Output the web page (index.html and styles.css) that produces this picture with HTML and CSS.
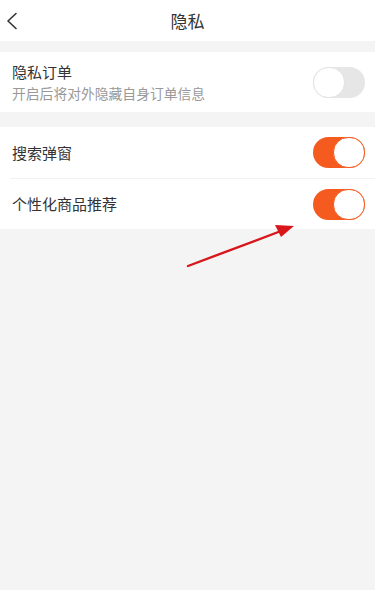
FILE: index.html
```html
<!DOCTYPE html>
<html lang="zh">
<head>
<meta charset="utf-8">
<link rel="stylesheet" href="styles.css">
</head>
<body>
<header class="nav">
  <svg class="back" width="12" height="18" viewBox="0 0 12 18"><path d="M10 1.5 L2 9 L10 16.5" fill="none" stroke="#333" stroke-width="1.6" stroke-linecap="round" stroke-linejoin="round"/></svg>
  <h1 class="title">隐私</h1>
</header>
<section class="card">
  <div class="row row-tall">
    <div class="texts">
      <div class="label">隐私订单</div>
      <div class="sub">开启后将对外隐藏自身订单信息</div>
    </div>
    <span class="switch"><span class="knob"></span></span>
  </div>
</section>
<section class="card card-2">
  <div class="row">
    <div class="label">搜索弹窗</div>
    <span class="switch on"><span class="knob"></span></span>
  </div>
  <div class="row">
    <div class="label">个性化商品推荐</div>
    <span class="switch on"><span class="knob"></span></span>
  </div>
</section>
<svg class="arrow" width="120" height="50" viewBox="0 0 120 50">
  <line x1="7" y1="45" x2="100" y2="10" stroke="#d8151a" stroke-width="2.4" stroke-linecap="round"/>
  <polygon points="113,5 94,4 100,16" fill="#d8151a"/>
</svg>
</body>
</html>
```
FILE: styles.css
```css
* { box-sizing: border-box; }
html, body { margin: 0; padding: 0; }
body {
  background: #f4f4f4;
  font-family: "Noto Sans CJK SC", "Noto Sans", sans-serif;
  color: #333;
  width: 375px;
  height: 590px;
  position: relative;
  overflow: hidden;
}
.nav {
  height: 41px;
  background: #fff;
  display: flex;
  align-items: center;
  justify-content: center;
  position: relative;
}
.back {
  position: absolute;
  left: 6px;
  top: 12px;
}
.title {
  margin: 0;
  font-size: 17px;
  font-weight: normal;
  color: #333;
}
.card {
  background: #fff;
  margin-top: 11px;
}
.card-2 { margin-top: 15px; }
.row {
  height: 51px;
  display: flex;
  align-items: center;
  justify-content: space-between;
  padding: 0 10px 0 12px;
  position: relative;
}
.row + .row { border-top: 1px solid #f2f2f2; margin-left: 10px; padding-left: 2px; }
.row-tall { height: 60px; }
.texts { display: flex; flex-direction: column; }
.label { font-size: 15px; line-height: 22px; color: #333; }
.sub { font-size: 13.8px; line-height: 19px; color: #999; margin-top: 1px; }
.switch {
  width: 52px;
  height: 31px;
  border-radius: 16px;
  background: #e6e6e6;
  position: relative;
  flex: none;
}
.knob {
  position: absolute;
  left: 0;
  top: 0;
  width: 32px;
  height: 31px;
  border-radius: 15px;
  background: #fff;
  border: 1px solid #e2e2e2;
}
.switch.on { background: #f55a1e; }
.switch.on .knob { left: 20px; border: 1.5px solid #f55a1e; }
.arrow {
  position: absolute;
  left: 181px;
  top: 221px;
}
```
